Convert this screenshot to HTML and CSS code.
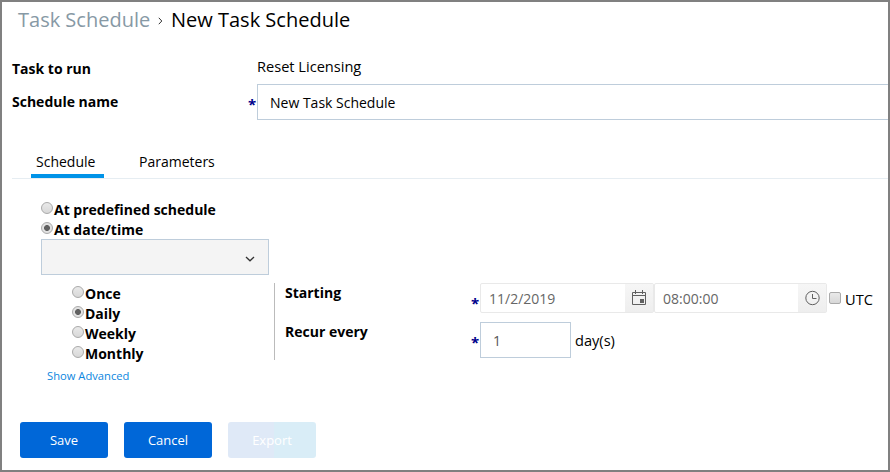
FILE: index.html
```html
<!DOCTYPE html>
<html lang="en">
<head>
<meta charset="utf-8">
<title>New Task Schedule</title>
<link rel="stylesheet" href="styles.css">
</head>
<body>
<main class="page">
  <header class="crumbs">
    <span class="parent">Task Schedule</span>
    <svg class="sep" width="5" height="8" viewBox="0 0 5 8"><path d="M.8 .8 3.8 4 .8 7.2"/></svg>
    <span class="current">New Task Schedule</span>
  </header>
  <div class="row task-row"><b class="label">Task to run</b><span class="value">Reset Licensing</span></div>
  <div class="row name-row"><b class="label">Schedule name</b><span class="req">*</span><div class="field name-field">New Task Schedule</div></div>
  <nav class="tabs"><div class="tab active">Schedule</div><div class="tab">Parameters</div></nav>
  <section class="mode">
    <div class="option"><i class="radio"></i><b>At predefined schedule</b></div>
    <div class="option"><i class="radio on"></i><b>At date/time</b></div>
    <div class="select"><svg width="10" height="6" viewBox="0 0 10 6"><path d="M1 1 5 4.8 9 1"/></svg></div>
  </section>
  <section class="details">
    <div class="freq">
      <div class="option"><i class="radio"></i><b>Once</b></div>
      <div class="option"><i class="radio on"></i><b>Daily</b></div>
      <div class="option"><i class="radio"></i><b>Weekly</b></div>
      <div class="option"><i class="radio"></i><b>Monthly</b></div>
    </div>
    <div class="timing">
      <div class="line start">
        <b class="label">Starting</b><span class="req">*</span>
        <div class="picker"><span class="date">11/2/2019</span><div class="pick"><svg width="16" height="16" viewBox="0 0 16 16"><path d="M1.5 2.5h13v12h-13zM1.5 5.5h13M4.5 0v4M11.500 0v4"/><path class="solid" d="M9 9h4v4H9z"/></svg></div></div>
        <div class="picker time"><span class="hour">08:00:00</span><div class="pick"><svg width="16" height="16" viewBox="0 0 16 16"><circle cx="8.500" cy="8" r="6.700"/><path d="M8.500 4v4.500H12.500"/></svg></div></div>
        <i class="check"></i><span class="utc">UTC</span>
      </div>
      <div class="line recur"><b class="label">Recur every</b><span class="req">*</span><div class="field count">1</div><span class="days">day(s)</span></div>
    </div>
  </section>
  <div class="advanced"><a>Show Advanced</a></div>
  <footer class="actions"><button>Save</button><button>Cancel</button><button class="off">Export</button></footer>
</main>
</body>
</html>
```

FILE: styles.css
```css
* { box-sizing: border-box; }
body { margin: 0; background: #fff; color: #000; font: 14px/20px "Open Sans", sans-serif; }
.page { width: 890px; height: 472px; border: 2px solid #808080; overflow: hidden; }
b { font-size: 14px; font-weight: 700; }
svg { display: block; fill: none; stroke: #606060; flex: none; }
.crumbs { display: flex; align-items: center; height: 36px; padding-left: 16px; font-size: 20px; white-space: nowrap; }
.parent { width: 132px; color: #8799a5; }
.sep { margin: 2px 8px 0; stroke: #333; }
.row { display: flex; align-items: flex-start; padding-left: 10px; white-space: nowrap; }
.row .label { width: 236px; }
.task-row { height: 46px; padding-top: 18px; }
.task-row .label { width: 245px; padding-top: 3px; }
.value, .days, .utc { font-size: 14.600px; }
.name-row .label { padding-top: 8px; }
.req { flex: none; width: 9px; color: #00008b; font-size: 15px; font-weight: 700; }
.name-row .req { padding-top: 10px; }
.field { height: 36px; border: 1px solid #becddb; line-height: 35px; padding-left: 12px; }
.name-field { flex: 1; border-right: 0; line-height: 36px; }
.tabs { display: flex; gap: 25px; height: 35px; margin: 24px 0 0 10px; padding-left: 19px; border-bottom: 1px solid #e6edf2; }
.tab { height: 34px; padding: 8px 5px 0; }
.active { width: 73px; border-bottom: 4px solid #0093e8; margin-right: 5px; }
.mode { padding: 20px 0 0 39px; }
.option { display: flex; height: 20px; white-space: nowrap; line-height: 21px; }
.radio { width: 12px; height: 12px; margin: 3px 1px 0 0; border: 1px solid #aaa; border-radius: 50%; background: linear-gradient(#e9e9e9, #d8d8d8); }
.on { background: radial-gradient(circle, #606060 0 2.6px, #e2e2e2 3.300px); }
.select { display: flex; justify-content: flex-end; align-items: center; width: 228px; height: 36px; border: 1px solid #becddb; background: #f4f4f4; padding: 3px 13px 0 0; }
.select svg { stroke: #333; stroke-width: 1.300; }
.details { display: flex; height: 85px; padding-top: 8px; }
.freq { width: 272px; padding-left: 70px; }
.timing { height: 77px; border-left: 1px solid #bbb; padding-left: 10px; }
.line { display: flex; align-items: flex-start; white-space: nowrap; }
.line .label { width: 186px; }
.start { height: 39px; }
.start .req, .recur .req { padding-top: 10px; }
.picker { display: flex; width: 174px; height: 30px; border: 1px solid #e9e9e9; border-radius: 2px; color: #666; line-height: 30px; padding-left: 8px; }
.picker.time { width: 173px; padding-left: 8px; }
.pick { display: grid; place-items: center; width: 28px; height: 28px; margin-left: auto; background: linear-gradient(#f6f6f6, #eee); }
.check { width: 12px; height: 12px; margin: 9px 4px 0 2px; border: 1px solid #aaa; border-radius: 2px; background: linear-gradient(#e9e9e9, #d8d8d8); }
.solid { fill: #606060; stroke: none; }
.utc { padding-top: 6px; }
.count { width: 91px; color: #555; }
.days { padding: 8px 0 0 4px; }
.advanced { padding: 6px 0 0 45px; height: 62px; font-size: 11.200px; color: #0b86e0; }
.actions { display: flex; gap: 16px; padding-left: 18px; }
button { width: 88px; height: 36px; padding: 0; border: 0; border-radius: 3px; background: #0067d8; color: #fff; font: 13px "Open Sans", sans-serif; }
.off { background: linear-gradient(90deg, #dfe9f7 52%, #d9edf7 52%); }
```
